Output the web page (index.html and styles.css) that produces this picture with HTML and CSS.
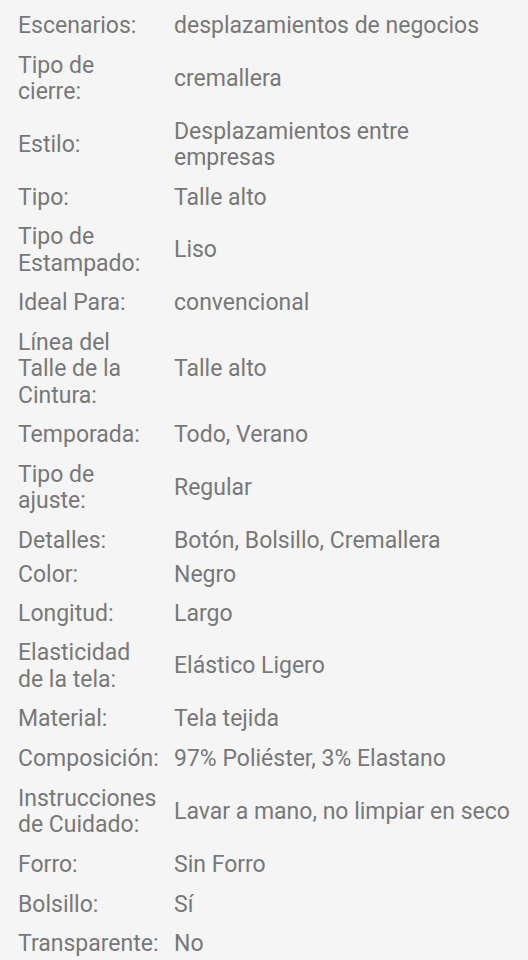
FILE: index.html
```html
<!DOCTYPE html>
<html lang="es">
<head>
    <meta charset="UTF-8">
    <meta name="viewport" content="width=device-width, initial-scale=1.0">
    <title>Especificaciones</title>
    <link rel="stylesheet" href="styles.css">
</head>
<body>
    <div class="specs">
        <div class="row"><div class="label">Escenarios:</div><div class="value">desplazamientos de negocios</div></div>
        <div class="row"><div class="label">Tipo de cierre:</div><div class="value">cremallera</div></div>
        <div class="row"><div class="label">Estilo:</div><div class="value">Desplazamientos entre<br>empresas</div></div>
        <div class="row"><div class="label">Tipo:</div><div class="value">Talle alto</div></div>
        <div class="row"><div class="label">Tipo de Estampado:</div><div class="value">Liso</div></div>
        <div class="row"><div class="label">Ideal Para:</div><div class="value">convencional</div></div>
        <div class="row"><div class="label">Línea del Talle de la Cintura:</div><div class="value">Talle alto</div></div>
        <div class="row"><div class="label">Temporada:</div><div class="value">Todo, Verano</div></div>
        <div class="row"><div class="label">Tipo de ajuste:</div><div class="value">Regular</div></div>
        <div class="row"><div class="label">Detalles:</div><div class="value">Botón, Bolsillo, Cremallera</div></div>
        <div class="row row-tight"><div class="label">Color:</div><div class="value">Negro</div></div>
        <div class="row"><div class="label">Longitud:</div><div class="value">Largo</div></div>
        <div class="row"><div class="label">Elasticidad de la tela:</div><div class="value">Elástico Ligero</div></div>
        <div class="row"><div class="label">Material:</div><div class="value">Tela tejida</div></div>
        <div class="row"><div class="label">Composición:</div><div class="value">97% Poliéster, 3% Elastano</div></div>
        <div class="row"><div class="label">Instrucciones de Cuidado:</div><div class="value">Lavar a mano, no limpiar en seco</div></div>
        <div class="row"><div class="label">Forro:</div><div class="value">Sin Forro</div></div>
        <div class="row"><div class="label">Bolsillo:</div><div class="value">Sí</div></div>
        <div class="row"><div class="label">Transparente:</div><div class="value">No</div></div>
    </div>
</body>
</html>
```

FILE: styles.css
```css
body {
    margin: 0;
    padding: 0;
    background: #f5f5f5;
    font-family: Roboto, "Noto Sans", Arial, sans-serif;
    color: #787878;
}
.specs {
    padding: 6px 12px 0 18px;
}
.row {
    display: grid;
    grid-template-columns: 128px 1fr;
    column-gap: 28px;
    align-items: center;
    padding: 6.75px 0;
    font-size: 23px;
    line-height: 26.25px;
}
.row-tight {
    padding: 1.25px 0 5.25px;
}
.label {
    white-space: normal;
}
```
